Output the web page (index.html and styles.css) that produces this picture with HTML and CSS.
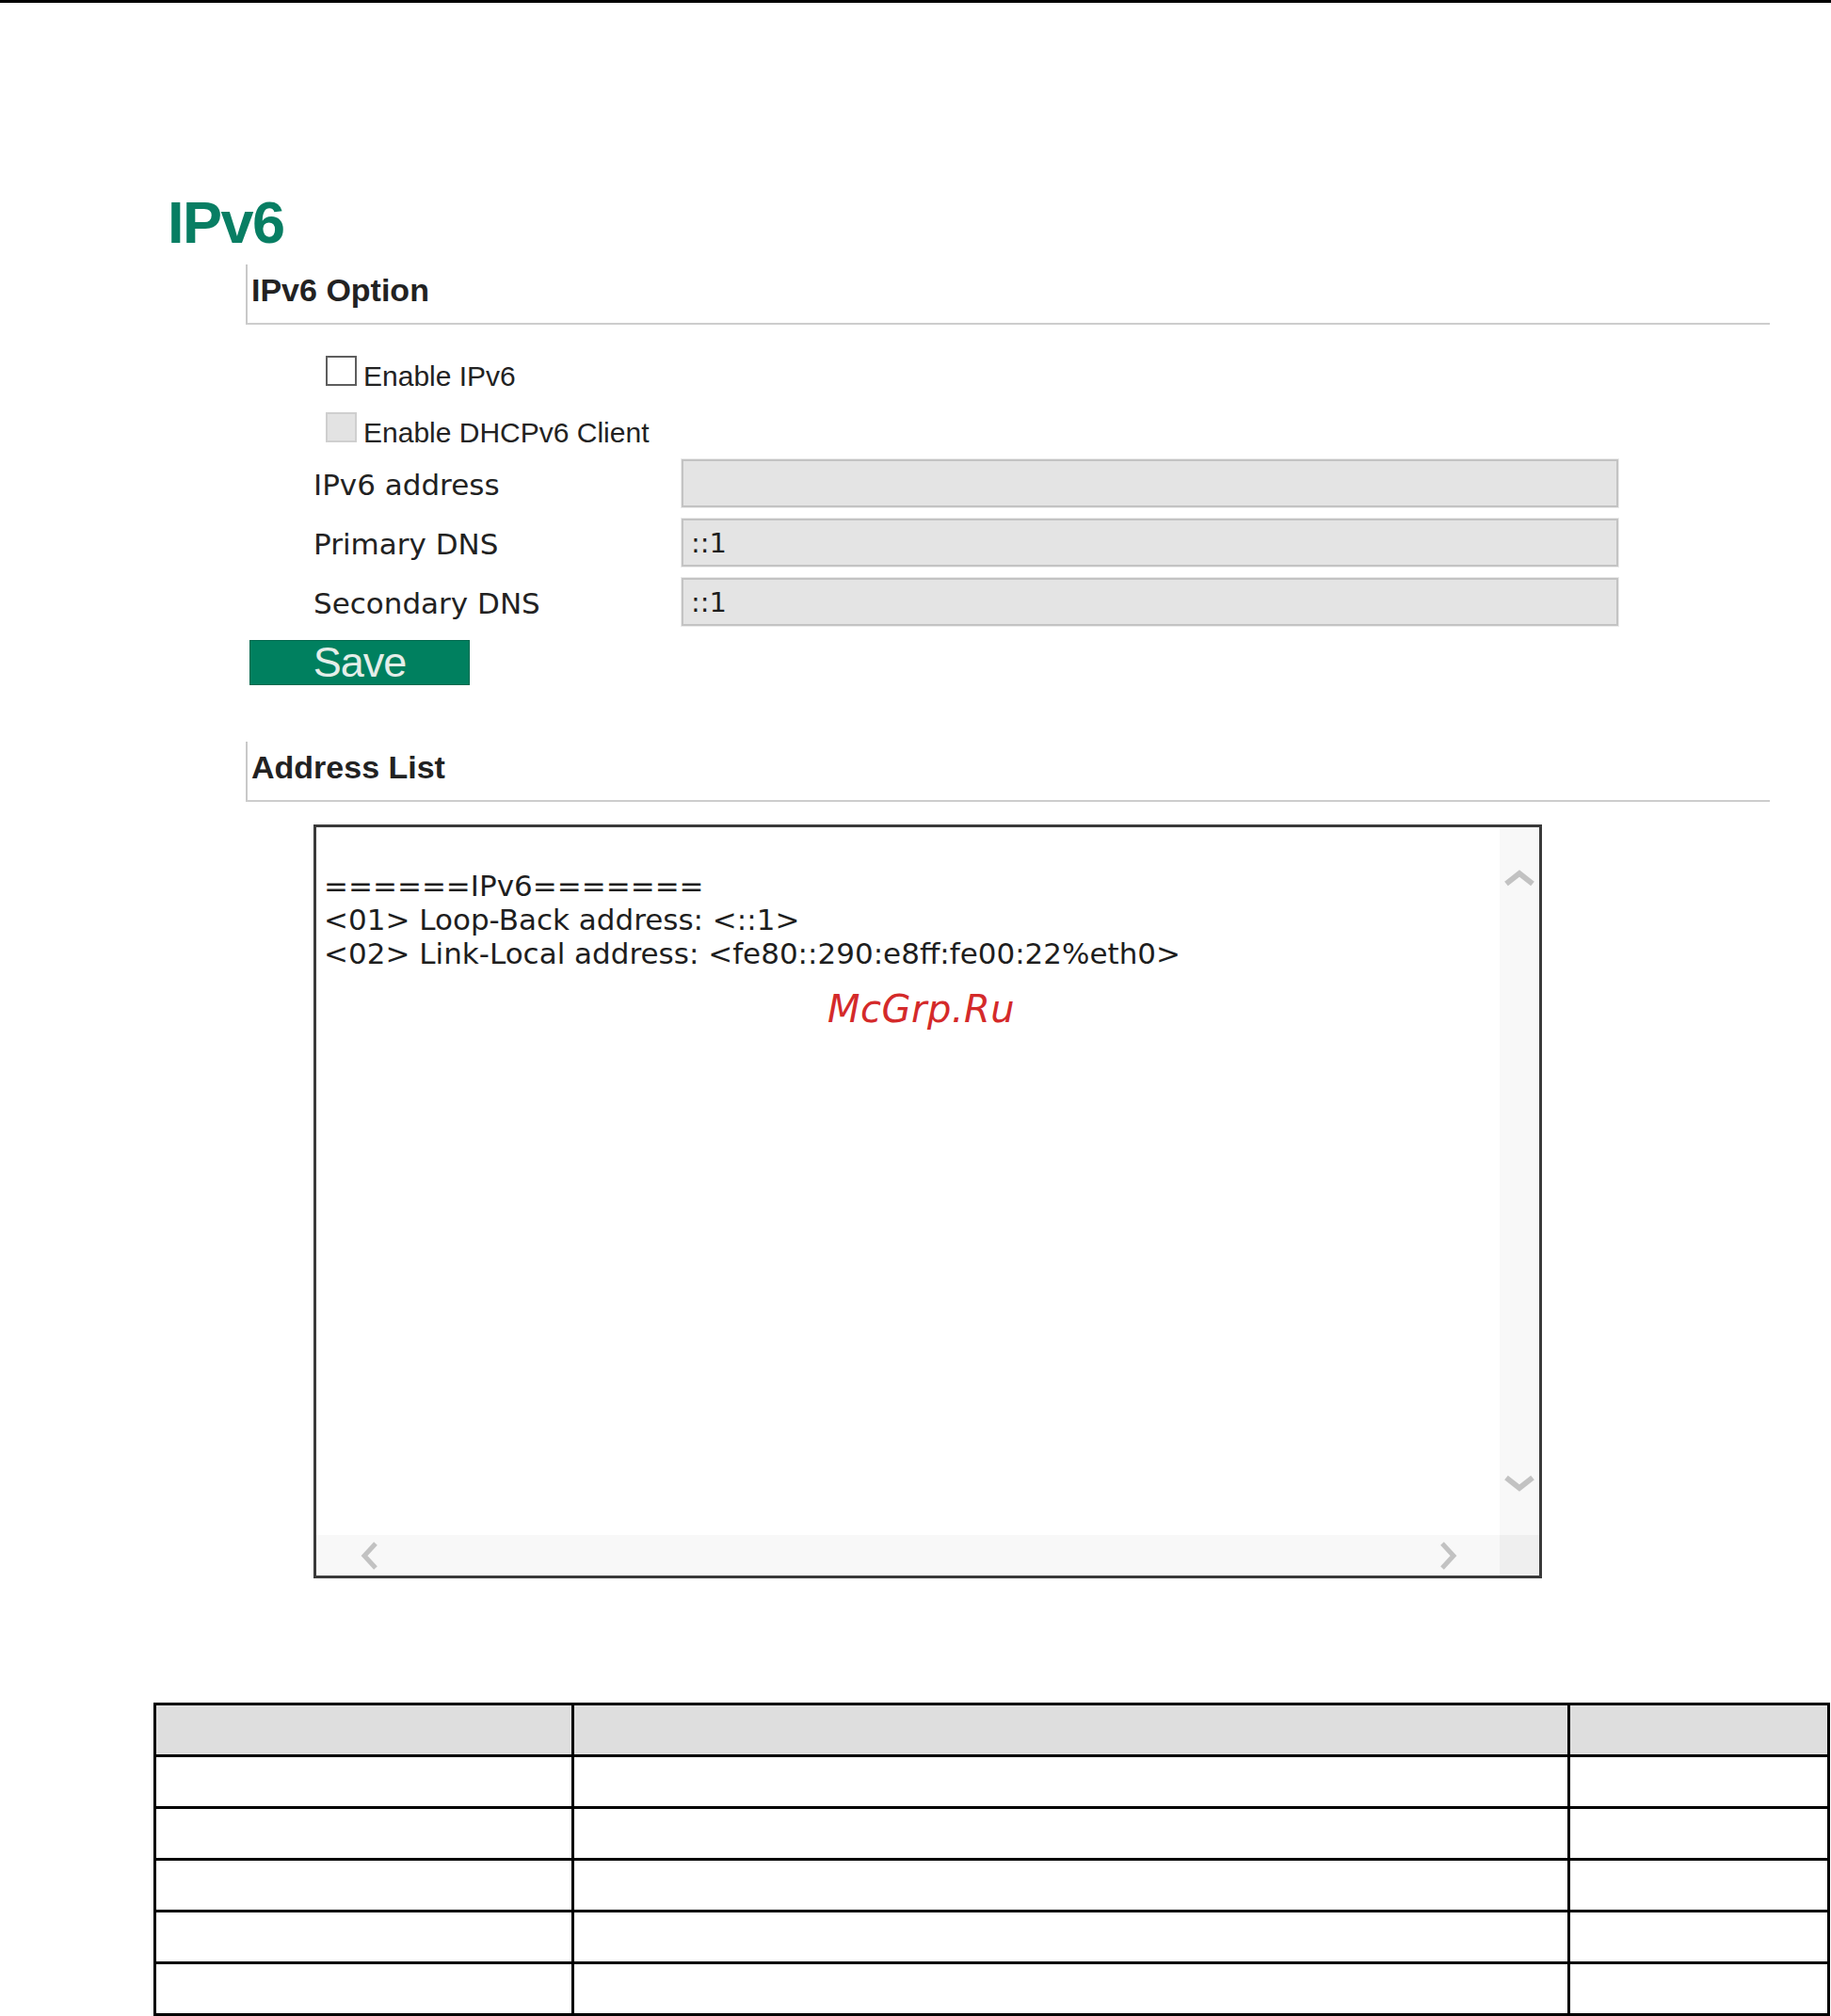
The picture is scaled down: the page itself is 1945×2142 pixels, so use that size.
FILE: index.html
```html
<!DOCTYPE html>
<html lang="en">
<head>
<meta charset="utf-8">
<title>IPv6</title>
<link rel="stylesheet" href="styles.css">
</head>
<body>
<div class="topbar"></div>
<main class="page">
  <h1 class="title">IPv6</h1>

  <section class="panel">
    <div class="panel-head">IPv6 Option</div>
    <div class="panel-body">
      <div class="check-row">
        <span class="checkbox"></span>
        <span class="check-label">Enable IPv6</span>
      </div>
      <div class="check-row">
        <span class="checkbox checkbox-disabled"></span>
        <span class="check-label">Enable DHCPv6 Client</span>
      </div>
      <div class="fields">
        <div class="field-row">
          <span class="field-label">IPv6 address</span>
          <div class="field-input"></div>
        </div>
        <div class="field-row">
          <span class="field-label">Primary DNS</span>
          <div class="field-input">::1</div>
        </div>
        <div class="field-row">
          <span class="field-label">Secondary DNS</span>
          <div class="field-input">::1</div>
        </div>
      </div>
      <button class="save-btn" type="button">Save</button>
    </div>
  </section>

  <section class="panel panel-list">
    <div class="panel-head">Address List</div>
    <div class="listbox">
      <div class="list-text">======IPv6=======
&lt;01&gt; Loop-Back address: &lt;::1&gt;
&lt;02&gt; Link-Local address: &lt;fe80::290:e8ff:fe00:22%eth0&gt;</div>
      <div class="vscroll">
        <svg class="chev-v" width="32" height="22" viewBox="0 0 32 22"><polyline points="2,18 16,7 30,18" fill="none" stroke="#c2c2c2" stroke-width="6"/></svg>
        <svg class="chev-v" width="32" height="22" viewBox="0 0 32 22"><polyline points="2,4 16,15 30,4" fill="none" stroke="#c2c2c2" stroke-width="6"/></svg>
      </div>
      <div class="hscroll">
        <svg class="chev-h" width="24" height="30" viewBox="0 0 24 30"><polyline points="19,2 7,15 19,28" fill="none" stroke="#c2c2c2" stroke-width="5"/></svg>
        <svg class="chev-h" width="24" height="30" viewBox="0 0 24 30"><polyline points="5,2 17,15 5,28" fill="none" stroke="#c2c2c2" stroke-width="5"/></svg>
      </div>
      <div class="corner"></div>
      <div class="watermark">McGrp.Ru</div>
    </div>
  </section>

  <table class="grid-table">
    <colgroup>
      <col class="c1"><col class="c2"><col class="c3">
    </colgroup>
    <thead>
      <tr><th></th><th></th><th></th></tr>
    </thead>
    <tbody>
      <tr><td></td><td></td><td></td></tr>
      <tr><td></td><td></td><td></td></tr>
      <tr><td></td><td></td><td></td></tr>
      <tr><td></td><td></td><td></td></tr>
      <tr><td></td><td></td><td></td></tr>
    </tbody>
  </table>
</main>
</body>
</html>
```
FILE: styles.css
```css
* { box-sizing: border-box; }

html, body {
  margin: 0;
  padding: 0;
  background: #ffffff;
  overflow: hidden;
}

body {
  font-family: "Liberation Sans", Arial, sans-serif;
  color: #222;
}

.topbar {
  height: 3px;
  background: #000;
}

.page {
  display: block;
}

.title {
  margin: 202px 0 0 178px;
  font-family: "Liberation Sans", Arial, sans-serif;
  font-weight: bold;
  font-size: 63px;
  line-height: 62px;
  height: 62px;
  color: #087e63;
  letter-spacing: -1.5px;
}

.panel {
  margin: 14px 0 0 261px;
  width: 1619px;
}

.panel-head {
  height: 64px;
  border-left: 2px solid #c9c9c9;
  border-bottom: 2px solid #cdcdcd;
  padding: 7px 0 0 4px;
  font-family: "Liberation Sans", Arial, sans-serif;
  font-weight: bold;
  font-size: 34px;
  line-height: 40px;
  color: #222;
}

.panel-body {
  padding-top: 33px;
}

.check-row {
  display: flex;
  height: 32px;
  margin-left: 85px;
  gap: 7px;
}

.check-row + .check-row {
  margin-top: 28px;
}

.checkbox {
  width: 33px;
  height: 32px;
  border: 2px solid #5e5e5e;
  background: #fff;
  flex: none;
}

.checkbox-disabled {
  border-color: #cfcfcf;
  background: #e3e3e3;
}

.check-label {
  margin-top: 6px;
  font-family: "Liberation Sans", Arial, sans-serif;
  font-size: 30px;
  line-height: 32px;
  color: #222;
  white-space: nowrap;
}

.fields {
  margin-top: 18px;
  display: flex;
  flex-direction: column;
  gap: 12px;
}

.field-row {
  display: grid;
  grid-template-columns: 391px 995px;
  align-items: center;
  padding-left: 72px;
  height: 51px;
}

.field-label {
  font-family: "DejaVu Sans", Verdana, sans-serif;
  font-size: 31px;
  line-height: 36px;
  color: #222;
  white-space: nowrap;
  padding-top: 3px;
}

.field-input {
  height: 51px;
  background: #e4e4e4;
  border: 2px solid #c3c3c3;
  box-shadow: 0 0 0 1px #ebebeb;
  padding-left: 8px;
  font-family: "DejaVu Sans", Verdana, sans-serif;
  font-size: 29px;
  line-height: 49px;
  color: #1e1e1e;
  font-weight: 500;
}

.save-btn {
  display: block;
  margin: 15px 0 0 4px;
  width: 234px;
  height: 48px;
  padding: 0;
  background: #00805f;
  border: 1px solid #00694e;
  color: #e4eee9;
  font-family: "Liberation Sans", Arial, sans-serif;
  font-size: 45px;
  line-height: 46px;
  text-align: center;
  letter-spacing: -1px;
}

.panel-list {
  margin-top: 60px;
}

.listbox {
  position: relative;
  margin: 24px 0 0 72px;
  width: 1305px;
  height: 801px;
  border: 3px solid #3a3a3a;
  display: grid;
  grid-template-columns: 1fr 42px;
  grid-template-rows: 1fr 43px;
  background: #fff;
}

.list-text {
  padding: 44px 0 0 8px;
  font-family: "DejaVu Sans", Verdana, sans-serif;
  font-size: 31px;
  line-height: 36px;
  color: #1e1e1e;
  white-space: pre;
  overflow: hidden;
}

.vscroll {
  background: #f8f8f8;
  display: flex;
  flex-direction: column;
  justify-content: space-between;
  align-items: center;
  padding: 42px 0 43px;
}

.hscroll {
  background: #f8f8f8;
  display: flex;
  justify-content: space-between;
  align-items: center;
  padding: 0 42px 0 44px;
}

.corner {
  background: #efefef;
}

.chev-v, .chev-h {
  display: block;
}

.watermark {
  position: absolute;
  left: 543px;
  top: 173px;
  font-family: "DejaVu Sans", Verdana, sans-serif;
  font-style: italic;
  font-size: 40px;
  line-height: 40px;
  color: #d42a2a;
  letter-spacing: 0.5px;
}

.grid-table {
  margin: 132px 0 0 163px;
  border-collapse: separate;
  border-spacing: 0;
  table-layout: fixed;
  width: 1781px;
  border-top: 3px solid #000;
  border-left: 3px solid #000;
}

.grid-table .c1 { width: 444px; }
.grid-table .c2 { width: 1058px; }
.grid-table .c3 { width: 276px; }

.grid-table th,
.grid-table td {
  height: 55px;
  padding: 0;
  border-right: 3px solid #000;
  border-bottom: 3px solid #000;
}

.grid-table th {
  background: #dedede;
}
```
